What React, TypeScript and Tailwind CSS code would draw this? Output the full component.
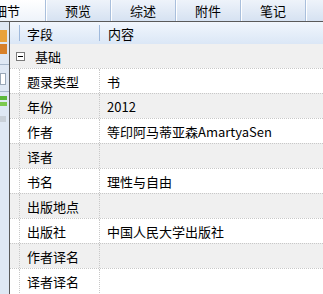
import React from "react";

const rows: [string, string][] = [
  ["题录类型", "书"],
  ["年份", "2012"],
  ["作者", "等印阿马蒂亚森AmartyaSen"],
  ["译者", ""],
  ["书名", "理性与自由"],
  ["出版地点", ""],
  ["出版社", "中国人民大学出版社"],
  ["作者译名", ""],
  ["译者译名", ""],
];

const tabs = ["预览", "综述", "附件", "笔记"];

export default function App() {
  return (
    <div
      className="w-[323px] h-[294px] overflow-hidden flex flex-col bg-white text-black text-[13px] leading-none"
      style={{ fontFamily: '"Noto Sans CJK SC", "Noto Sans", sans-serif' }}
    >
      {/* Tab bar */}
      <div className="h-[22px] shrink-0 flex border-b border-[#5a5a5a] bg-gradient-to-b from-[#eef3fa] to-[#d6e2f2]">
        <div className="w-[45px] shrink-0 flex items-center overflow-hidden bg-gradient-to-b from-[#ffffff] to-[#eef3fa]">
          <span className="-ml-[6px]">细节</span>
        </div>
        {tabs.map((t) => (
          <div
            key={t}
            className="w-[65px] shrink-0 flex items-center justify-center border-l border-[#a9bfdc] shadow-[inset_1px_0_0_#ffffff]"
          >
            {t}
          </div>
        ))}
        <div className="flex-1 border-l border-[#a9bfdc] shadow-[inset_1px_0_0_#ffffff]" />
      </div>

      {/* Body */}
      <div className="flex-1 flex min-h-0">
        {/* Left strip */}
        <div className="w-[9px] shrink-0 flex flex-col bg-[#dfe8f4] overflow-hidden">
          <div className="h-[8px]" />
          <div className="h-[12px] w-[7px] bg-[#e9a23b]" />
          <div className="h-[2px]" />
          <div className="h-[10px] w-[7px] bg-[#d8812a]" />
          <div className="h-[10px]" />
          <div className="h-[1px] bg-[#a8b8cc]" />
          <div className="h-[8px]" />
          <div className="h-[12px] w-[6px] bg-white border border-[#9aa8b8]" />
          <div className="h-[6px]" />
          <div className="h-[1px] bg-[#a8b8cc]" />
          <div className="h-[4px]" />
          <div className="h-[4px] w-[7px] bg-[#5cb83c]" />
          <div className="h-[2px]" />
          <div className="h-[4px] w-[7px] bg-[#7bc94f]" />
          <div className="h-[10px]" />
          <div className="h-[6px] w-[6px] bg-[#c9d0d8]" />
        </div>

        {/* Table */}
        <div className="flex-1 flex flex-col border-l border-[#5a5a5a] min-w-0">
          {/* Header */}
          <div className="h-[22px] shrink-0 flex items-center bg-gradient-to-b from-[#f1f6fd] to-[#dbe7f6]">
            <div className="w-[9px] shrink-0" />
            <div className="w-[1px] h-[16px] bg-[#9fb9dc]" />
            <div className="w-[79px] shrink-0 pl-[7px]">字段</div>
            <div className="w-[1px] h-[16px] bg-[#9fb9dc]" />
            <div className="flex-1 pl-[8px]">内容</div>
          </div>

          {/* Group row */}
          <div className="h-[24px] shrink-0 flex items-center bg-[#f0f0f0]">
            <div className="w-[6px] shrink-0" />
            <div className="w-[9px] h-[9px] border border-[#7a7a7a] bg-white flex items-center justify-center shrink-0">
              <div className="w-[5px] h-[1px] bg-black" />
            </div>
            <div className="pl-[10px]">基础</div>
          </div>

          {rows.map(([k, v], i) => (
            <div
              key={k}
              className={`h-[25px] shrink-0 flex border-t border-dotted border-[#c8c8c8] ${
                i % 2 === 1 ? "bg-[#f0f0f0]" : "bg-white"
              }`}
            >
              <div className="w-[10px] shrink-0 border-r border-dotted border-[#c8c8c8]" />
              <div className="w-[80px] shrink-0 flex items-center pl-[7px] border-r border-dotted border-[#c8c8c8]">
                {k}
              </div>
              <div className="flex-1 flex items-center pl-[7px] whitespace-nowrap">{v}</div>
            </div>
          ))}
        </div>
      </div>
    </div>
  );
}
